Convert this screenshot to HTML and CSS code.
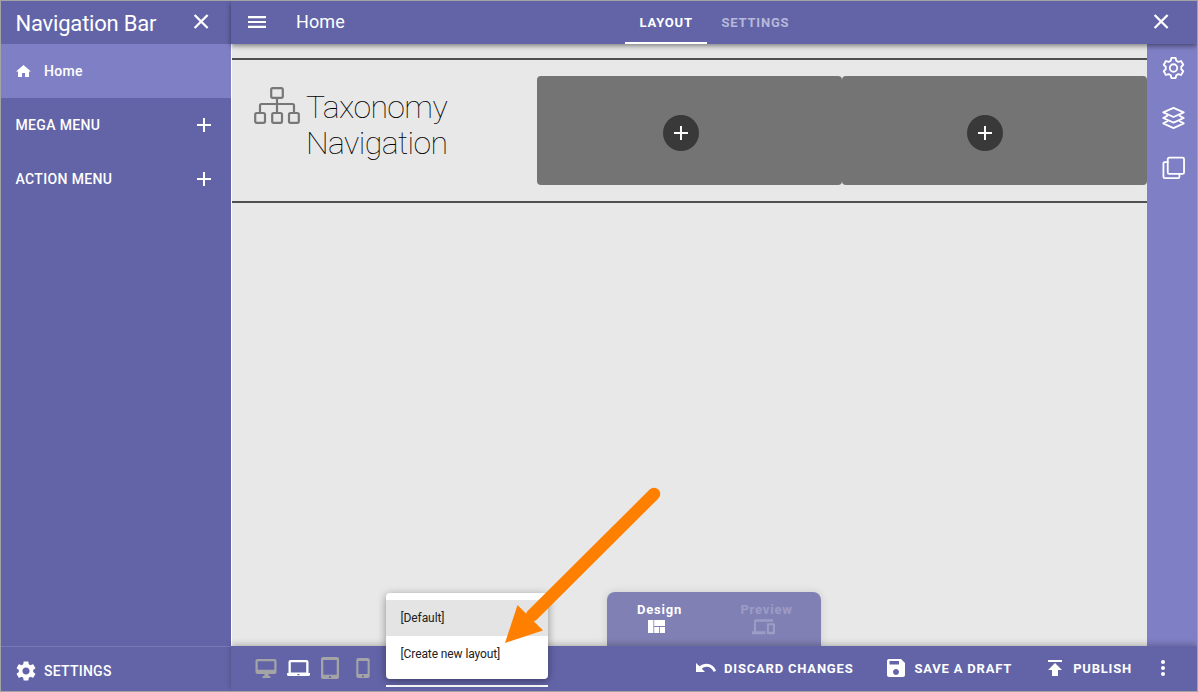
FILE: index.html
```html
<!DOCTYPE html>
<html lang="en">
<head>
<meta charset="utf-8">
<title>Navigation Bar</title>
<link rel="stylesheet" href="styles.css">
</head>
<body>
<div class="app">
  <aside class="sidebar">
    <header class="sidebar-head">
      <h1 class="sidebar-title">Navigation Bar</h1>
      <svg class="icon-close" width="14" height="14" viewBox="0 0 14 14"><path d="M.6 0l13 13M13.600 0L.6 13"/></svg>
    </header>
    <nav class="sidebar-nav">
      <a class="nav-item nav-active">
        <svg class="fill nav-home" width="16" height="12" viewBox="0 0 16 12"><path d="M8.500 0L16 6.600h-2V12h-4V8H7v4H3V6.600H1z"/></svg>
        <span class="home-label">Home</span>
      </a>
      <a class="nav-item"><span class="mega">MEGA MENU</span><svg class="plus" width="14" height="14" viewBox="0 0 14 14"><path d="M7 0v14M0 7h14"/></svg></a>
      <a class="nav-item"><span class="action">ACTION MENU</span><svg class="plus" width="14" height="14" viewBox="0 0 14 14"><path d="M7 0v14M0 7h14"/></svg></a>
    </nav>
    <footer class="sidebar-foot">
      <svg class="fill" width="24" height="24" viewBox="0 0 24 24"><path d="M19.14 12.94c.04-.3.06-.61.06-.94 0-.32-.02-.64-.07-.94l2.03-1.58c.18-.14.23-.41.12-.61l-1.92-3.32c-.12-.22-.37-.29-.59-.22l-2.39.96c-.5-.38-1.03-.7-1.62-.94l-.36-2.54c-.04-.24-.24-.41-.48-.41h-3.84c-.24 0-.43.17-.47.41l-.36 2.54c-.59.24-1.13.57-1.62.94l-2.39-.96c-.22-.08-.47 0-.59.22L2.74 8.87c-.12.21-.08.47.12.61l2.03 1.58c-.05.3-.09.63-.09.94s.02.64.07.94l-2.03 1.58c-.18.14-.23.41-.12.61l1.92 3.32c.12.22.37.29.59.22l2.39-.96c.5.38 1.03.7 1.62.94l.36 2.54c.05.24.24.41.48.41h3.84c.24 0 .44-.17.47-.41l.36-2.54c.59-.24 1.13-.56 1.62-.94l2.39.96c.22.08.47 0 .59-.22l1.92-3.32c.12-.22.07-.47-.12-.61l-2.01-1.58zM12 15.6c-1.98 0-3.6-1.62-3.6-3.6s1.62-3.6 3.6-3.6 3.6 1.62 3.6 3.6-1.62 3.6-3.6 3.6z"/></svg>
      <span>SETTINGS</span>
    </footer>
  </aside>

  <main class="main">
    <header class="topbar">
      <svg class="fill menu-icon" width="18" height="12" viewBox="0 0 18 12"><path d="M0 0h18v2.200H0zM0 4.900h18v2.200H0zM0 9.800h18V12H0z"/></svg>
      <h2 class="page-title">Home</h2>
      <div class="tabs">
        <span class="tab tab-active">LAYOUT</span>
        <span class="tab tab-settings">SETTINGS</span>
      </div>
      <svg class="icon-close" width="14" height="14" viewBox="0 0 14 14"><path d="M.6 0l13 13M13.600 0L.6 13"/></svg>
    </header>

    <div class="workspace">
      <section class="canvas">
        <div class="block">
          <div class="brand">
            <svg class="tree" width="46" height="37" viewBox="0 0 46 37"><rect x="17.200" y="1.200" width="11.600" height="9.600" rx="1.500"/><path d="M23 11v15M6 26v-7.500q0-1.500 1.500-1.500h31q1.500 0 1.500 1.500V26"/><rect x="1.200" y="26" width="9.800" height="9.800" rx="1.500"/><rect x="18.200" y="26" width="9.800" height="9.800" rx="1.500"/><rect x="35" y="26" width="9.800" height="9.800" rx="1.500"/></svg>
            <div class="brand-name">Taxonomy<br>Navigation</div>
          </div>
          <div class="zone"><button class="add"><svg class="plus" width="14" height="14" viewBox="0 0 14 14"><path d="M7 0v14M0 7h14"/></svg></button></div>
          <div class="zone"><button class="add add-last"><svg class="plus" width="14" height="14" viewBox="0 0 14 14"><path d="M7 0v14M0 7h14"/></svg></button></div>
        </div>
      </section>
      <aside class="rail">
        <svg class="line" width="23" height="24" viewBox="0 0 24 24"><path d="M9.800 1.500h4.400l.7 2.900 2.100 1.200 2.900-.9 2.300 3.900-2.100 2.100v2.600l2.100 2.100-2.300 3.900-2.900-.9-2.100 1.200-.7 2.900H9.800l-.7-2.900L7 18.400l-2.900.9-2.300-3.900 2.100-2.100v-2.600L1.800 8.600l2.300-3.900 2.900.9 2.100-1.200z"/><circle cx="12" cy="12" r="3.900"/></svg>
        <svg class="line" width="23" height="24" viewBox="0 0 24 24"><path d="M12 1.500l10.700 4.700L12 11 1.300 6.200z"/><path d="M5.500 9.800L1.300 12 12 16.800 22.700 12l-4.200-2.200"/><path d="M5.500 15.400L1.300 17.600 12 22.500l10.700-4.900-4.200-2.200"/></svg>
        <svg class="line" width="23" height="24" viewBox="0 0 24 24"><rect x="6" y="1.200" width="17" height="17" rx="1.500"/><path d="M6 5.800H3Q1.500 5.800 1.500 7.300v13.700q0 1.500 1.500 1.500h13.700q1.500 0 1.500-1.500v-2.700"/></svg>
      </aside>
      <div class="mode-switch">
        <div class="mode"><span>Design</span><svg class="fill mode-icon" width="17" height="13" viewBox="0 0 17 13"><path d="M0 0h5.400v13H0zM6.200 0H17V6H6.200zM6.200 7h5v6h-5zM12 7h5v6h-5z"/></svg></div>
        <div class="mode mode-off"><span>Preview</span><svg class="fill mode-icon preview-icon" width="23" height="16" viewBox="0 0 24 16"><path d="M4 2.400h18V0H4C2.900 0 2 .9 2 2v10.500H0V15.500h14v-3H4.400zM23 4h-6.500c-.55 0-1 .45-1 1v9.500c0 .55.45 1 1 1H23c.55 0 1-.45 1-1V5c0-.55-.45-1-1-1zm-1.200 9h-4.100V6.200h4.100z"/></svg></div>
      </div>
    </div>

    <footer class="bottombar">
      <div class="devices">
        <svg class="off" width="22" height="19" viewBox="0 0 22 19"><path fill-rule="evenodd" d="M2.500 0h17q2 0 2 2v11q0 2-2 2h-6v1.500l2 1v1.500h-8v-1.500l2-1V15h-7q-2 0-2-2V2q0-2 2-2zM2.700 2.200v8.600h16.600V2.200z"/></svg>
        <svg class="fill laptop" width="23" height="17" viewBox="0 0 23 17"><path fill-rule="evenodd" d="M3.500 0h16q2 0 2 2v11h1.500v1.500q0 1.500-1.500 1.500h-20Q0 16 0 14.500V13h1.500V2q0-2 2-2zM3.800 2.200v10.300h15.400V2.200zM10.500 14v1.200h2V14z"/></svg>
        <svg class="off tablet" width="18" height="22" viewBox="0 0 18 22"><path fill-rule="evenodd" d="M2 0h14q2 0 2 2v18q0 2-2 2H2q-2 0-2-2V2Q0 0 2 0zM2.300 3v14.700h13.400V3zM8 19.200V21h2v-1.800z"/></svg>
        <svg class="off phone" width="14" height="20" viewBox="0 0 14 20"><path fill-rule="evenodd" d="M2.300 0h9.400q2 0 2 2v16q0 2-2 2H2.300q-2 0-2-2V2q0-2 2-2zM2.400 3v13h9.200V3zM6 17.500V19h2v-1.500z"/></svg>
      </div>
      <div class="layout-select">
        <ul class="menu">
          <li class="menu-item menu-selected">[Default]</li>
          <li class="menu-item create">[Create new layout]</li>
        </ul>
      </div>
      <div class="actions">
        <svg class="fill" width="20" height="10" viewBox="0 0 20 10"><path d="M10.500 .8C7.800 .8 5.600 1.700 3.500 3.200L0 0v9h9L5.800 5.700C7 4.600 8.700 3.700 10.500 3.700c3.500 0 6 2 7 5L20 7.900C18.600 3.700 15 .8 10.500 .8z"/></svg>
        <span class="discard">DISCARD CHANGES</span>
        <svg class="fill save-icon" width="18" height="18" viewBox="0 0 18 18"><path d="M14 0H2C.9 0 0 .9 0 2v14c0 1.100.9 2 2 2h14c1.100 0 2-.9 2-2V4zM9 16c-1.660 0-3-1.340-3-3s1.340-3 3-3 3 1.340 3 3-1.340 3-3 3zm3-10.500H2.500V2H12z"/></svg>
        <span class="save">SAVE A DRAFT</span>
        <svg class="fill publish-icon" width="14" height="16" viewBox="0 0 14 16"><path d="M0 0h14v2H0zM0 10h4v6h6v-6h4L7 3z"/></svg>
        <span class="publish">PUBLISH</span>
        <svg class="fill more-icon" width="6" height="16" viewBox="0 0 6 16"><circle cx="3" cy="2" r="2"/><circle cx="3" cy="8" r="2"/><circle cx="3" cy="14" r="2"/></svg>
      </div>
    </footer>
  </main>
  <svg class="pointer" width="160" height="160" viewBox="0 0 160 160"><path d="M153 10L31 131.500" stroke="#ff8000" stroke-width="12.500" stroke-linecap="round"/><path d="M4 159L16.500 121 42 146.500z" fill="#ff8000"/></svg>
</div>
</body>
</html>
```
FILE: styles.css
```css
* { box-sizing: border-box; }
body { margin: 0; font-family: Roboto, "Liberation Sans", sans-serif; color: #fff; }
h1, h2, ul { margin: 0; padding: 0; font-weight: 400; list-style: none; }
svg { display: block; flex: none; overflow: visible; }
span { white-space: nowrap; }

.app { position: relative; display: flex; width: 1198px; height: 692px; border: 1px solid #a3a3a3; overflow: hidden; background: #6264a7; }
.fill { fill: #fff; }
.icon-close, .plus { fill: none; stroke: #fff; stroke-width: 2; }
.icon-close { stroke-width: 2.3; margin-bottom: 1px; }
.line { fill: none; stroke: #fff; stroke-width: 1.9; stroke-linejoin: round; stroke-linecap: round; }

.sidebar { width: 230px; display: flex; flex-direction: column; }
.sidebar-head { height: 43px; display: flex; align-items: center; justify-content: space-between; padding: 0 23px 0 14.500px; }
.sidebar-title { font-size: 22px; letter-spacing: -.2px; line-height: 26px; padding-top: 2px; }
.sidebar-nav { flex: 1; }
.nav-item { height: 54px; display: flex; align-items: center; justify-content: space-between; padding: 0 20px 0 14px; font-size: 14px; font-weight: 500; }
.nav-active { background: #7f7fc5; justify-content: flex-start; gap: 13px; }
.home-label { letter-spacing: .3px; }
.mega, .action { letter-spacing: .35px; padding-left: .5px; }
.sidebar-foot { height: 45px; border-top: 1px solid #7779b6; display: flex; align-items: center; gap: 6px; padding: 3px 0 0 13px; font-size: 14px; font-weight: 500; letter-spacing: .25px; }

.main { width: 966px; display: flex; flex-direction: column; }
.topbar { position: relative; z-index: 2; height: 43px; display: flex; align-items: center; padding: 0 29px 0 17px; background: #6264a7; box-shadow: 0 2px 5px rgba(0, 0, 0, .45); }
.menu-icon { margin-bottom: 1px; }
.page-title { width: 359px; padding: 0 0 2px 30px; font-size: 18px; font-weight: 400; letter-spacing: .1px; line-height: 24px; }
.tabs { flex: 1; display: flex; height: 43px; }
.tab { padding: 0 14.500px; font-size: 13px; font-weight: 700; letter-spacing: .8px; line-height: 43px; }
.tab-active { border-bottom: 2px solid #fff; width: 82px; }
.tab-settings { color: #b8b8da; }

.workspace { position: relative; flex: 1; display: flex; }
.canvas { flex: 1; border-left: 1px solid #fff; padding-top: 14px; background: #e8e8e8; }
.block { height: 145px; display: flex; padding: 16px 0; border: solid #505050; border-width: 2px 0; }
.brand { width: 305px; display: flex; gap: 6px; padding: 11px 0 0 22px; }
.brand-name { margin-top: 2px; font-size: 32px; font-weight: 100; letter-spacing: -.6px; line-height: 36px; color: #000; }
.tree { fill: none; stroke: #777; stroke-width: 2.2; }
.zone { flex: 1; height: 109px; display: flex; align-items: center; justify-content: center; border-radius: 4px; background: #747474; }
.add { width: 36px; height: 36px; display: flex; align-items: center; justify-content: center; margin: 5px 18px 0 0; padding: 0; border: 0; border-radius: 50%; background: #393939; }
.add-last { margin-right: 19px; }
.rail { width: 50px; display: flex; flex-direction: column; align-items: center; gap: 26px; padding: 12px 0 0 2px; background: #7f7fc5; }

.mode-switch { position: absolute; left: 376px; bottom: 0; width: 214px; height: 54px; display: flex; border-radius: 8px 8px 0 0; background: #8080b5; box-shadow: 0 0 8px rgba(0, 0, 0, .12); }
.mode { width: 50%; display: flex; flex-direction: column; align-items: center; gap: 2px; padding: 9px 2px 0 0; font-size: 13px; font-weight: 700; letter-spacing: .8px; line-height: 17px; }
.mode-icon { margin: 0 6px 0 0; }
.preview-icon { margin-top: -1px; }
.mode-off { opacity: .22; }

.bottombar { position: relative; z-index: 2; height: 45px; display: flex; align-items: center; padding-right: 31px; background: #6264a7; box-shadow: 0 -2px 6px rgba(0, 0, 0, .22); }
.devices { display: flex; align-items: center; padding: 0 0 1px 24px; }
.off { fill: #a4a4a7; }
.laptop { margin-left: 10px; }
.tablet { margin-left: 11px; }
.phone { margin-left: 17px; }
.layout-select { position: relative; width: 162px; height: 41px; align-self: flex-start; margin-left: 16px; border-bottom: 2px solid #fff; }
.menu { position: absolute; left: 0; bottom: 6px; width: 162px; height: 86px; padding-top: 7px; border-radius: 4px; background: #fff; color: #212121; box-shadow: 0 2px 8px rgba(0, 0, 0, .4); }
.menu-item { height: 36px; padding-left: 14.500px; font-size: 12px; letter-spacing: -.1px; line-height: 36px; }
.menu-selected { background: #e4e4e4; }
.actions { flex: 1; display: flex; align-items: center; justify-content: flex-end; padding-bottom: 1px; font-size: 13px; font-weight: 700; letter-spacing: .8px; }
.discard { margin: 0 34px 0 8px; }
.save { margin: 0 36px 0 9px; }
.publish { margin: 0 28px 0 11px; }
.pointer { position: absolute; z-index: 5; left: 500px; top: 483px; fill: none; }
```
